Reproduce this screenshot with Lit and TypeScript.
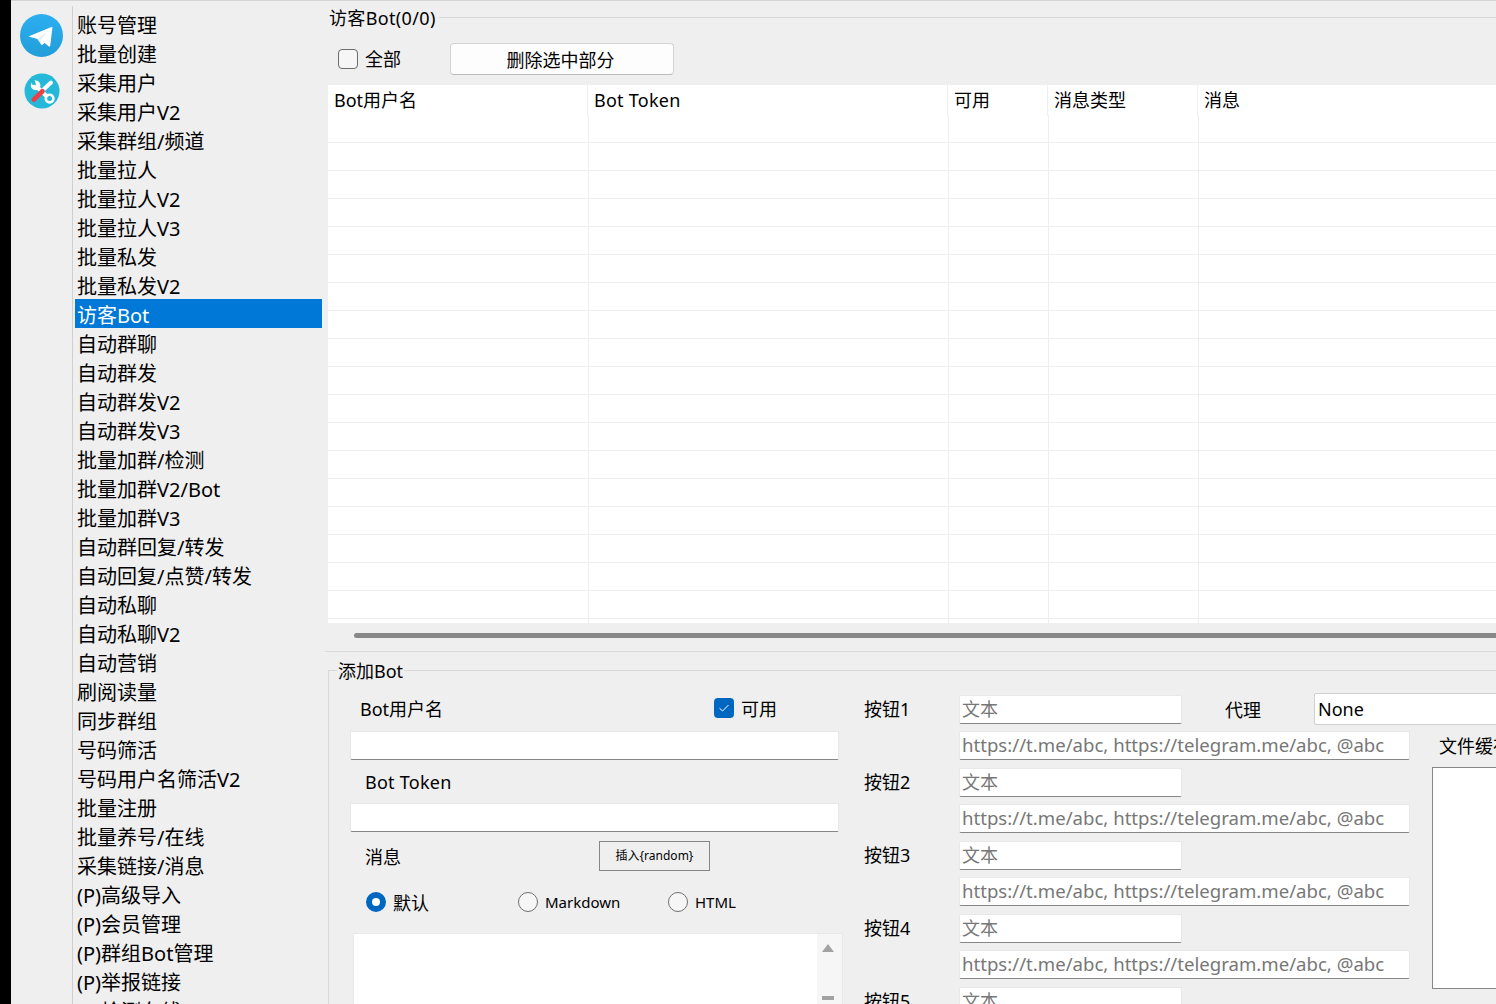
import { LitElement, html, css, svg } from "lit";
import { customElement } from "lit/decorators.js";

const MENU = [
  "账号管理", "批量创建", "采集用户", "采集用户V2", "采集群组/频道", "批量拉人", "批量拉人V2", "批量拉人V3",
  "批量私发", "批量私发V2", "访客Bot", "自动群聊", "自动群发", "自动群发V2", "自动群发V3", "批量加群/检测",
  "批量加群V2/Bot", "批量加群V3", "自动群回复/转发", "自动回复/点赞/转发", "自动私聊", "自动私聊V2", "自动营销",
  "刷阅读量", "同步群组", "号码筛活", "号码用户名筛活V2", "批量注册", "批量养号/在线", "采集链接/消息",
  "(P)高级导入", "(P)会员管理", "(P)群组Bot管理", "(P)举报链接", "(P)检测在线",
];
const ACTIVE = "访客Bot";
const COLUMNS = ["Bot用户名", "Bot Token", "可用", "消息类型", "消息"];
const URL_HINT = "https://t.me/abc, https://telegram.me/abc, @abc";

const telegramIcon = svg`
  <svg width="43" height="43" viewBox="0 0 43 43">
    <defs>
      <linearGradient id="tg" x1="0" y1="0" x2="0" y2="1">
        <stop offset="0" stop-color="#2caef0"/>
        <stop offset="1" stop-color="#219ed9"/>
      </linearGradient>
    </defs>
    <circle cx="21.5" cy="21.5" r="21.5" fill="url(#tg)"/>
    <path d="M8.3 22.4 L31.5 13 Q32.6 12.7 32.4 14 L30.2 32 Q30 33 29 32.5 L24.6 28.9 L21.8 31.2 L17.5 25 Z" fill="#fff"/>
    <path d="M17.5 25 L27 17.8 L20.4 26.4 L21.8 31.2 Z" fill="#e3eff7"/>
  </svg>`;

const toolsIcon = svg`
  <svg width="36" height="36" viewBox="0 0 36 36">
    <circle cx="18" cy="18" r="17.5" fill="#25b8d8"/>
    <g fill="none" stroke-linecap="round">
      <path d="M19.5 16.5 L27 9.5" stroke="#fff" stroke-width="4"/>
      <path d="M12.5 13.5 L24.5 25" stroke="#fff" stroke-width="4"/>
    </g>
    <circle cx="11.6" cy="12.4" r="4.8" fill="#fff"/>
    <path d="M6.5 6.5 L11 8 L12 12.2 L8 11.4 Z" fill="#25b8d8"/>
    <path d="M9.8 26.6 L18.4 18.2" fill="none" stroke="#ea4048" stroke-width="4.8" stroke-linecap="round"/>
    <circle cx="25.6" cy="25.6" r="3.8" fill="#25b8d8" stroke="#fff" stroke-width="2.6"/>
  </svg>`;

@customElement("app-root")
export class AppRoot extends LitElement {
  static styles = css`
    :host {
      display: block;
      width: 1496px;
      height: 1004px;
      overflow: hidden;
      background: #000;
      font-family: "Noto Sans", "Noto Sans CJK SC", sans-serif;
      font-size: 18px;
      color: #000;
    }
    .window {
      display: flex;
      height: 1003px;
      margin-left: 11px;
      border-top: 1px solid #d4d4d4;
      background: #efefef;
      overflow: hidden;
    }
    .rail {
      flex: none;
      box-sizing: border-box;
      width: 62px;
      margin-top: 5px;
      padding-top: 8px;
      border-right: 1px solid #cfcfcf;
      display: flex;
      flex-direction: column;
      align-items: center;
      gap: 16px;
    }
    .rail svg { display: block; }
    .menu {
      flex: none;
      width: 247px;
      margin: 8px 6px 0 2px;
      font-size: 20px;
    }
    .menu div {
      height: 29px;
      line-height: 33px;
      padding-left: 2px;
      white-space: nowrap;
    }
    .menu .active { background: #0078d7; color: #fff; }

    .main { flex: none; width: 1300px; display: flex; flex-direction: column; }
    .main > * { flex: none; }
    .head { display: flex; align-items: center; height: 34px; padding-left: 1px; }
    .head span { line-height: 24px; padding-right: 3px; letter-spacing: 0.35px; }
    .head i { flex: 1; height: 1px; background: #d9d9d9; margin-bottom: 1px; }
    .toolbar { display: flex; align-items: center; height: 32px; padding: 8px 0 10px 10px; }
    .check {
      box-sizing: border-box;
      flex: none;
      width: 20px;
      height: 20px;
      border: 1px solid #6b6b6b;
      border-radius: 4px;
      background: #f6f6f6;
    }
    .check.on {
      border: 0;
      background: #0067c0;
      display: flex;
      align-items: center;
      justify-content: center;
    }
    .toolbar label { margin: -2px 48px 0 7px; width: 37px; }
    .btn {
      box-sizing: border-box;
      width: 224px;
      height: 32px;
      line-height: 32px;
      padding-right: 3px;
      text-align: center;
      background: #fdfdfd;
      border: 1px solid #d2d2d2;
      border-bottom-color: #bcbcbc;
      border-radius: 4px;
    }

    .table { height: 538px; overflow: hidden; background: #fff; }
    .thead { display: grid; grid-template-columns: 260px 360px 100px 150px 430px; height: 30px; }
    .thead div { padding-left: 6px; line-height: 31px; border-right: 1px solid #efefef; }
    .thead .latin { letter-spacing: 0.25px; }
    .tr {
      display: grid;
      grid-template-columns: 261px 360px 100px 150px 429px;
      box-sizing: border-box;
      height: 28px;
      border-bottom: 1px solid #efefef;
    }
    .tr div { border-right: 1px solid #efefef; }

    .hscroll { height: 5px; margin: 10px 0 0 26px; background: #888; border-radius: 3px 0 0 3px; }
    .rule { height: 1px; margin: 13px 0 0 -3px; background: #d9d9d9; }

    fieldset {
      margin: 5px 0 0;
      padding: 0;
      min-width: 0;
      border: 0;
      border-top: 1px solid #d9d9d9;
      border-left: 1px solid #d9d9d9;
    }
    legend { margin-left: 8px; padding: 2px 1px 0; line-height: 24px; }
    .form {
      display: grid;
      grid-template-columns: 487px 546px 300px;
      column-gap: 26px;
      padding: 12px 0 0 22px;
      height: 340px;
    }
    .col-left { display: flex; flex-direction: column; }
    .line { display: flex; align-items: center; height: 29px; flex: none; }
    .line.first { height: 25px; margin-bottom: 4px; }
    .first > span { padding-left: 9px; }
    .text { padding-left: 14px; letter-spacing: 0.25px; }
    .form input {
      box-sizing: border-box;
      height: 29px;
      flex: none;
      padding: 0 2px 2px;
      font: inherit;
      background: #fff;
      border: 1px solid #e8e8e8;
      border-bottom-color: #868686;
      border-radius: 2px;
      outline: none;
    }
    .form input::placeholder { color: #777; opacity: 1; }
    .wide { width: calc(100% + 2px); margin: 7px 0 0 -1px; }
    .mt7 { margin-top: 7px; }
    .avail { display: flex; align-items: center; gap: 7px; margin-left: auto; width: 124px; }
    .msg-row { height: 30px; margin-top: 9px; }
    .msg-row span { padding-left: 14px; width: 234px; flex: none; }
    .insert {
      box-sizing: border-box;
      width: 111px;
      height: 30px;
      line-height: 28px;
      text-align: center;
      font-size: 12px;
      border: 1px solid #868686;
    }
    .radios { display: flex; align-items: center; height: 22px; margin: 20px 0 0 15px; }
    .radio { display: flex; align-items: center; gap: 7px; font-size: 15px; }
    .radio b {
      box-sizing: border-box;
      display: block;
      width: 20px;
      height: 20px;
      border: 1px solid #707070;
      border-radius: 50%;
      background: #f6f6f6;
    }
    .radio.on { font-size: 18px; }
    .radio.on b { border: 6px solid #0067c0; background: #fff; }
    .r1 { width: 152px; }
    .r2 { width: 150px; }
    .memo {
      box-sizing: border-box;
      width: 490px;
      height: 100px;
      margin: 20px 0 0 2px;
      background: #fff;
      border: 1px solid #e8e8e8;
      display: flex;
      justify-content: flex-end;
    }
    .vbar {
      width: 25px;
      background: #f6f6f6;
      display: flex;
      flex-direction: column;
      align-items: center;
      padding-top: 10px;
    }
    .up { width: 0; height: 0; margin-left: -3px; border: 6px solid transparent; border-top: 0; border-bottom: 8px solid #a2a2a2; }
    .down { width: 12px; height: 4px; margin: 44px 0 0 -3px; background: #a2a2a2; }

    .col-mid { display: flex; flex-direction: column; gap: 8px; }
    .pair { display: flex; flex-direction: column; gap: 7px; flex: none; }
    .pair .line label { width: 95px; flex: none; margin-top: -3px; }
    .short { width: 223px; margin: 0; }
    .form input.url { width: 451px; margin: 0 0 0 95px; font-size: 18.6px; }
    .proxy { margin-left: 43px; width: 89px; flex: none; margin-top: -2px; }
    .combo {
      box-sizing: border-box;
      flex: none;
      width: 300px;
      height: 32px;
      line-height: 30px;
      margin-top: -2px;
      padding-left: 3px;
      background: #fff;
      border: 1px solid #cfcfcf;
      border-radius: 2px;
    }
    .col-right { padding-top: 36px; margin-left: -4px; }
    .col-right .cache { padding-left: 7px; white-space: nowrap; }
    .cache span { margin-top: -2px; }
    .files {
      box-sizing: border-box;
      height: 222px;
      margin-top: 7px;
      background: #fff;
      border: 1px solid #868686;
    }
  `;

  private renderButtonPair(n: number) {
    return html`
      <div class="pair">
        <div class="line">
          <label>按钮${n}</label>
          <input class="short" placeholder="文本" />
          ${n === 1
            ? html`<span class="proxy">代理</span><div class="combo">None</div>`
            : ""}
        </div>
        <input class="url" placeholder=${URL_HINT} />
      </div>
    `;
  }

  render() {
    const rows = Array.from({ length: 19 });
    return html`
      <div class="window">
        <div class="rail">${telegramIcon}${toolsIcon}</div>
        <div class="menu">
          ${MENU.map((m) => html`<div class=${m === ACTIVE ? "active" : ""}>${m}</div>`)}
        </div>
        <div class="main">
          <div class="head"><span>访客Bot(0/0)</span><i></i></div>
          <div class="toolbar">
            <div class="check"></div>
            <label>全部</label>
            <div class="btn">删除选中部分</div>
          </div>
          <div class="table">
            <div class="thead">
              ${COLUMNS.map((c) => html`<div class=${c === "Bot Token" ? "latin" : ""}>${c}</div>`)}
            </div>
            ${rows.map(
              () => html`<div class="tr"><div></div><div></div><div></div><div></div><div></div></div>`
            )}
          </div>
          <div class="hscroll"></div>
          <div class="rule"></div>
          <fieldset>
            <legend>添加Bot</legend>
            <div class="form">
              <div class="col-left">
                <div class="line first">
                  <span>Bot用户名</span>
                  <div class="avail">
                    <div class="check on">
                      <svg width="12" height="10" viewBox="0 0 12 10"><path d="M1.5 5.2 L4.5 8 L10.5 2" fill="none" stroke="#fff" stroke-width="1"/></svg>
                    </div>
                    <span>可用</span>
                  </div>
                </div>
                <input class="wide" />
                <div class="line mt7 text">Bot Token</div>
                <input class="wide" />
                <div class="line msg-row">
                  <span>消息</span>
                  <div class="insert">插入{random}</div>
                </div>
                <div class="radios">
                  <div class="radio on r1"><b></b>默认</div>
                  <div class="radio r2"><b></b>Markdown</div>
                  <div class="radio"><b></b>HTML</div>
                </div>
                <div class="memo">
                  <div class="vbar"><div class="up"></div><div class="down"></div></div>
                </div>
              </div>
              <div class="col-mid">${[1, 2, 3, 4, 5].map((n) => this.renderButtonPair(n))}</div>
              <div class="col-right">
                <div class="line cache"><span>文件缓存</span></div>
                <div class="files"></div>
              </div>
            </div>
          </fieldset>
        </div>
      </div>
    `;
  }
}
